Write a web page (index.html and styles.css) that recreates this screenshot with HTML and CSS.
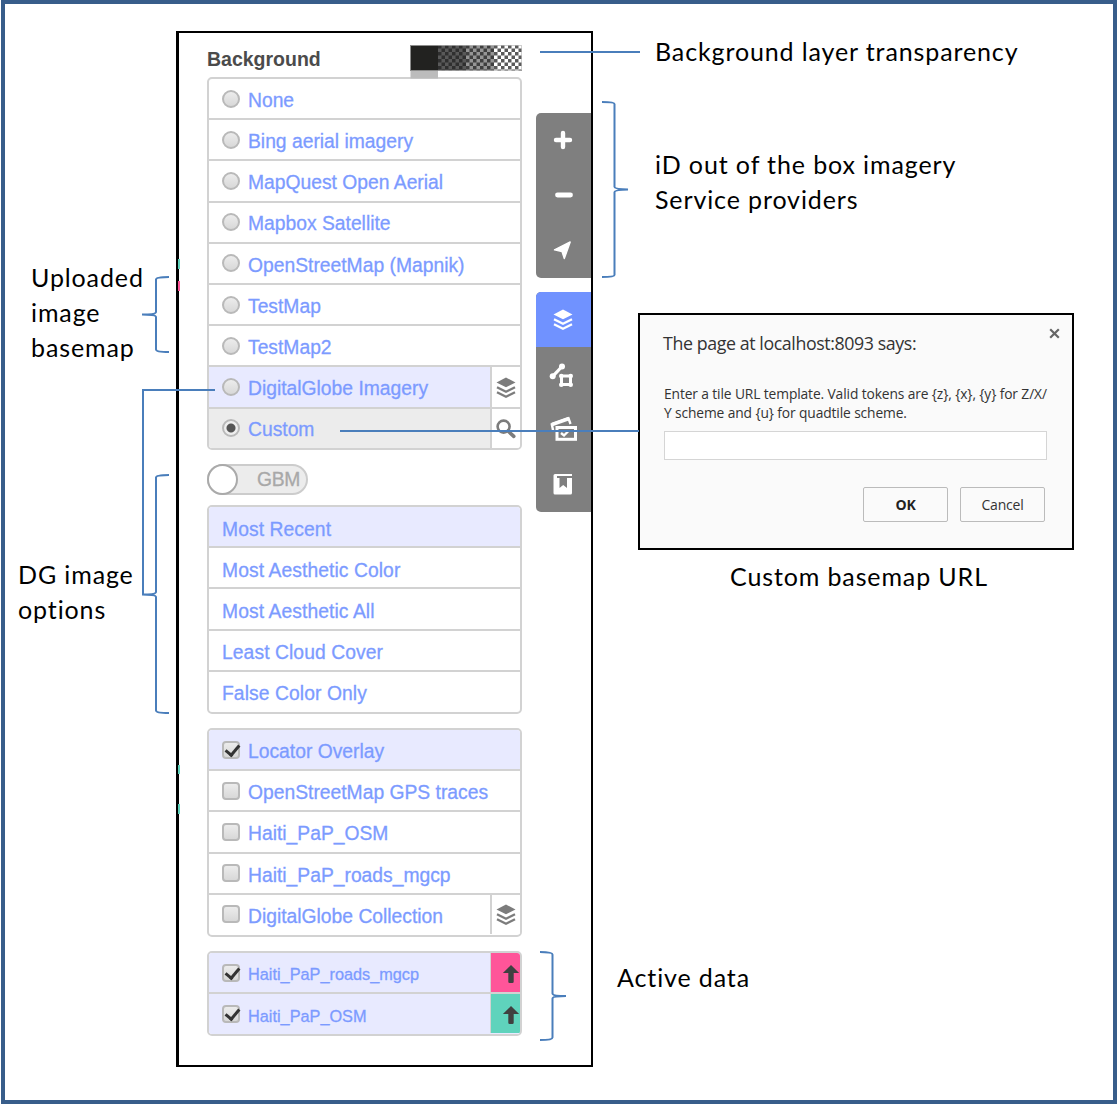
FILE: index.html
```html
<!DOCTYPE html>
<html lang="en">
<head>
<meta charset="utf-8">
<title>Background panel guide</title>
<link rel="stylesheet" href="styles.css">
</head>
<body>
<svg class="symbols" width="0" height="0" aria-hidden="true">
  <defs>
    <symbol id="layers" viewBox="0 0 20 22">
      <path d="M10 0.5 19.5 5.6 10 10.2 0.5 5.6Z" fill="currentColor"/>
      <path d="M1 10.2 10 14.8 19 10.2M1 15.2 10 19.8 19 15.2" fill="none" stroke="currentColor" stroke-width="2.3"/>
    </symbol>
    <symbol id="up" viewBox="0 0 20 22">
      <path d="M10 1 19 10H13V19.5Q13 21 11.5 21H8.5Q7 21 7 19.5V10H1Z" fill="currentColor"/>
    </symbol>
    <pattern id="checker" width="7" height="7" patternUnits="userSpaceOnUse">
      <rect width="3.5" height="3.5" fill="#5a5a5a"/><rect x="3.5" y="3.5" width="3.5" height="3.5" fill="#5a5a5a"/>
    </pattern>
  </defs>
</svg>
<main class="canvas">
  <section class="panel">
    <div class="content">
      <header class="heading">
        <h1>Background</h1>
        <svg class="opacity" width="112" height="34" viewBox="0 0 112 34">
          <rect width="112" height="26" fill="#fff"/>
          <rect width="112" height="26" fill="url(#checker)"/>
          <rect width="28" height="26" fill="#222220"/>
          <rect x="28" width="28" height="26" fill="#222" opacity=".75"/>
          <rect x="56" width="28" height="26" fill="#222" opacity=".48"/>
          <rect x=".5" y=".5" width="111" height="25" fill="none" stroke="#bbb" opacity=".7"/>
          <rect x=".5" y="26" width="27.5" height="7.500" fill="#bcbcbc"/>
        </svg>
      </header>
      <ul class="list imagery">
        <li><i class="radio"></i><span>None</span></li>
        <li><i class="radio"></i><span>Bing aerial imagery</span></li>
        <li><i class="radio"></i><span>MapQuest Open Aerial</span></li>
        <li><i class="radio"></i><span>Mapbox Satellite</span></li>
        <li><i class="radio"></i><span>OpenStreetMap (Mapnik)</span></li>
        <li><i class="radio"></i><span>TestMap</span></li>
        <li><i class="radio"></i><span>TestMap2</span></li>
        <li class="active"><i class="radio"></i><span>DigitalGlobe Imagery</span><b class="side"><svg width="20" height="22"><use href="#layers"/></svg></b></li>
        <li class="chosen"><i class="radio on"></i><span>Custom</span><b class="side"><svg width="20" height="20" viewBox="0 0 20 20" fill="none" stroke="currentColor"><circle cx="7.6" cy="7.6" r="6" stroke-width="2.6"/><path d="M12 12 17.8 17.3" stroke-width="3.6" stroke-linecap="round"/></svg></b></li>
      </ul>
      <div class="toggle"><i class="knob"></i><span>GBM</span></div>
      <ul class="list options">
        <li class="active"><span>Most Recent</span></li>
        <li><span>Most Aesthetic Color</span></li>
        <li><span>Most Aesthetic All</span></li>
        <li><span>Least Cloud Cover</span></li>
        <li><span>False Color Only</span></li>
      </ul>
      <ul class="list overlays">
        <li class="active"><i class="check on"></i><span>Locator Overlay</span></li>
        <li><i class="check"></i><span>OpenStreetMap GPS traces</span></li>
        <li><i class="check"></i><span>Haiti_PaP_OSM</span></li>
        <li><i class="check"></i><span>Haiti_PaP_roads_mgcp</span></li>
        <li><i class="check"></i><span>DigitalGlobe Collection</span><b class="side"><svg width="20" height="22"><use href="#layers"/></svg></b></li>
      </ul>
      <ul class="list data">
        <li class="active"><i class="check on"></i><span>Haiti_PaP_roads_mgcp</span><b class="side pink"><svg width="20" height="22"><use href="#up"/></svg></b></li>
        <li class="active"><i class="check on"></i><span>Haiti_PaP_OSM</span><b class="side teal"><svg width="20" height="22"><use href="#up"/></svg></b></li>
      </ul>
    </div>
    <nav class="tools">
      <div class="group">
        <button><svg width="20" height="20" viewBox="0 0 20 20"><path d="M10 3V17M3 10H17" stroke="#fff" stroke-width="4.400" stroke-linecap="round"/></svg></button>
        <button><svg width="20" height="20" viewBox="0 0 20 20"><path d="M4.500 10H17.500" stroke="#fff" stroke-width="4.800" stroke-linecap="round"/></svg></button>
        <button><svg width="20" height="20" viewBox="0 0 20 20"><path d="M17.200 2 11.300 18.600 9 11.500 1.500 9.800Z" fill="#fff" stroke="#fff" stroke-width="1.400" stroke-linejoin="round"/></svg></button>
      </div>
      <div class="group">
        <button class="current"><svg width="20" height="22"><use href="#layers"/></svg></button>
        <button><svg width="28" height="26" viewBox="0 0 28 26" fill="#fff"><path d="M3.700 14.300 13 4.500" stroke="#fff" stroke-width="3.200"/><circle cx="3.700" cy="14.300" r="3"/><circle cx="13" cy="4.500" r="3"/><rect x="12.500" y="14" width="9" height="8.500" fill="none" stroke="#fff" stroke-width="3"/><circle cx="12.300" cy="14" r="2.300"/><circle cx="21.700" cy="14" r="2.300"/><circle cx="12.300" cy="22.700" r="2.300"/><circle cx="21.700" cy="22.700" r="2.300"/></svg></button>
        <button><svg width="28" height="26" viewBox="0 0 28 26" fill="none" stroke="#fff"><path d="M4.300 15.500 2.800 8.300 19.500 2.300 21.500 8" stroke-width="2.400"/><path d="M3 8.500 20 2.500" stroke-width="3.500"/><rect x="8" y="11.500" width="18.500" height="11.800" stroke-width="3"/><path d="M12 17 15 19.500 19 15.500" stroke-width="2.400"/></svg></button>
        <button><svg width="20" height="22" viewBox="0 0 20 22"><path d="M2 1H19V3H4V5H19V20Q19 21.500 17.500 21.500H2Q.5 21.500 .5 20V2.500Q.5 1 2 1Z" fill="#fff"/><path d="M6.500 5H14V15L10.200 12 6.500 15Z" fill="#7f7f7f"/></svg></button>
      </div>
    </nav>
  </section>

  <section class="dialog">
    <header><h2>The page at localhost:8093 says:</h2>
      <svg width="11" height="11" viewBox="0 0 11 11"><path d="M1.200 1.200 9.800 9.800M9.800 1.200 1.200 9.800" stroke="#666" stroke-width="2.200"/></svg></header>
    <p>Enter a tile URL template. Valid tokens are {z}, {x}, {y} for Z/X/<br>Y scheme and {u} for quadtile scheme.</p>
    <div class="field"></div>
    <footer><button class="ok">OK</button><button>Cancel</button></footer>
  </section>

  <p class="note transparency">Background layer transparency</p>
  <p class="note providers">iD out of the box imagery<br>Service providers</p>
  <p class="note uploaded">Uploaded<br>image<br>basemap</p>
  <p class="note dg">DG image<br>options</p>
  <p class="note url">Custom basemap URL</p>
  <p class="note active-data">Active data</p>

  <svg class="connectors" width="1117" height="1104" fill="none" stroke="#4a7ebb" stroke-width="2">
    <path d="M540 52H640M340 431H639M215 390H143V595"/>
    <path d="M602 102Q614.500 102 614.500 104V187Q614.500 189 628 189.500Q614.500 190 614.500 192V275Q614.500 277 602 277"/>
    <path d="M169 277Q156 277 156 279.500V312Q156 314.500 142 314.500Q156 314.500 156 317V349.500Q156 352 169 352"/>
    <path d="M169 475Q156 475 156 477.500V592Q156 594.500 142 594.500Q156 594.500 156 597V710.500Q156 713 169 713"/>
    <path d="M540 952Q552.500 952 552.500 954.500V993.500Q552.500 996 566 996Q552.500 996 552.500 998.500V1037.500Q552.500 1040 540 1040"/>
    <g stroke="none"><path d="M178 259h2v10h-2zM178 765h2v9h-2zM178 804h2v10h-2z" fill="#5fd3bc"/><path d="M178 281h2v10h-2z" fill="#ff5599"/></g>
  </svg>
</main>
</body>
</html>
```
FILE: styles.css
```css
* { box-sizing: border-box; }
body { margin: 0; background: #fff; font-family: "Liberation Sans", Arial, sans-serif; }
h1, h2, p, ul { margin: 0; padding: 0; }
.symbols { position: absolute; }
.canvas { position: relative; width: 1116px; height: 1104px; margin-left: 1px; border: 4px solid #385d8a; }

/* Imagery panel */
.panel { position: absolute; left: 171px; top: 27px; width: 417px; height: 1036px; border: 2px solid #000; border-left-width: 3px; display: flex; justify-content: space-between; }
.content { width: 315px; margin-left: 28px; padding-top: 12px; }
.heading { display: flex; justify-content: space-between; height: 32px; }
.heading h1 { font-size: 19.500px; line-height: 28px; color: #4b4b4b; }
.opacity { flex: none; position: relative; z-index: 1; }
.list { list-style: none; border: 2px solid #d2d2d2; border-radius: 5px; overflow: hidden; display: grid; grid-auto-rows: 41.200px; color: #7c9bff; font-size: 19.300px; }
.imagery { height: 373px; }
.options { height: 209px; margin-top: 10px; }
.overlays { height: 209px; margin-top: 14px; }
.data { height: 85px; margin-top: 14px; font-size: 16.300px; }
.list li { display: flex; align-items: center; padding-left: 13px; border-bottom: 2px solid #d2d2d2; }
.list li:last-child { border-bottom-color: transparent; }
.list li span { flex: 1; white-space: nowrap; -webkit-text-stroke: .3px; padding-top: 4.500px; }
.options li span { padding-top: 6px; letter-spacing: .08px; }
.overlays li span { padding-top: 5px; }
.active { background: #e8eaff; }
.chosen { background: #ececec; }
.radio, .check { width: 18px; height: 18px; margin-right: 8px; border: 2px solid #b9b9b9; background: linear-gradient(#ececec, #d8d8d8); flex: none; }
.radio { border-radius: 50%; }
.radio.on { background: radial-gradient(circle, #555 0 4px, #eee 5px); }
.check { border-radius: 4px; position: relative; }
.check.on::after { content: ""; position: absolute; left: 4px; top: -1px; width: 6px; height: 11px; border: solid #333; border-width: 0 3px 3px 0; transform: rotate(40deg); }
.side { align-self: stretch; width: 30px; flex: none; display: flex; align-items: center; justify-content: center; background: #fff; border-left: 2px solid #d2d2d2; color: #7c7c7c; padding: 2px 1px 0 0; }
.pink, .teal { color: #404040; border-left-width: 1px; padding: 2px 0 0 11px; }
.pink { background: #ff5599; }
.teal { background: #5fd3bc; }
.toggle { display: flex; align-items: center; width: 101px; height: 31px; margin-top: 14px; border: 2px solid #ccc; border-radius: 16px; background: #ececec; color: #a8a8a8; font-size: 19.300px; }
.toggle span { margin-left: 19px; -webkit-text-stroke: .3px; letter-spacing: -.3px; }
.knob { width: 31px; height: 31px; margin-left: -2px; border: 2px solid #aaa; border-radius: 50%; background: #fff; flex: none; }

/* Map tools */
.tools { width: 55px; padding-top: 80px; }
.group { border-radius: 5px 0 0 5px; overflow: hidden; background: #7f7f7f; margin-bottom: 14px; }
.group + .group { margin-top: 14.500px; }
.group button { display: flex; align-items: center; justify-content: center; width: 55px; height: 54.900px; padding: 0 2px 0 0; border: 0; background: none; color: #fff; }
.group .current { background: #7092ff; }

/* Prompt dialog */
.dialog { position: absolute; left: 633px; top: 309px; width: 436px; height: 237px; border: 2px solid #000; background: #fafafa; padding: 13px 25px 0 24px; font-family: "Open Sans", sans-serif; color: #333; }
.dialog header { display: flex; justify-content: space-between; height: 56px; }
.dialog header svg { margin-right: -13px; }
.dialog h2 { font-size: 17.800px; line-height: 30px; font-weight: 400; letter-spacing: -.4px; white-space: nowrap; margin-left: -1px; }
.dialog p { font-size: 13.800px; line-height: 19px; letter-spacing: -.12px; white-space: nowrap; }
.field { height: 29px; margin-top: 9px; border: 1px solid #d5d5d5; background: #fff; }
.dialog footer { display: flex; justify-content: flex-end; gap: 12px; margin-top: 27px; padding-right: 2px; }
.dialog button { width: 85px; height: 35px; border: 1.500px solid #bbb; border-radius: 2px; background: #fafafa; font: 14px "Open Sans", sans-serif; letter-spacing: -.2px; color: #333; }
.dialog .ok { font-weight: 700; color: #222; }

/* Callouts */
.note { position: absolute; font: 25px/35px Lato, sans-serif; letter-spacing: .88px; color: #000; white-space: nowrap; }
.transparency { left: 650px; top: 30px; }
.providers { left: 650px; top: 143px; }
.uploaded { left: 26px; top: 256px; }
.dg { left: 13px; top: 553px; }
.url { left: 725px; top: 555px; }
.active-data { left: 612px; top: 956px; }
.connectors { position: absolute; left: -5px; top: -4px; }
```
